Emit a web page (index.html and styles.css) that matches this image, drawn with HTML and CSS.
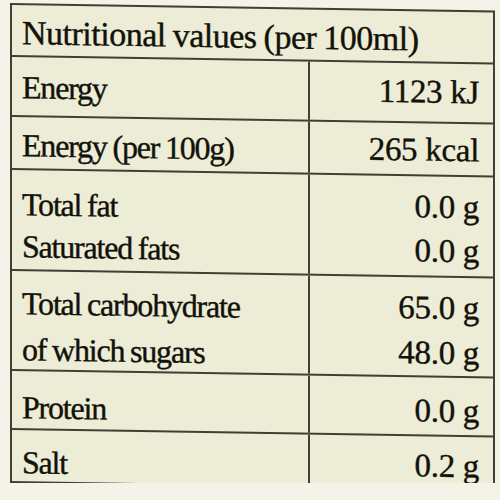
FILE: index.html
```
<!DOCTYPE html>
<html lang="en">
<head>
    <meta charset="UTF-8">
    <title>Nutritional values</title>
    <link rel="stylesheet" href="styles.css">
</head>
<body>

<div class="label">
    <div class="label-title">Nutritional values (per 100ml)</div>

    <div class="row row-energy">
        <div class="cell name">Energy</div>
        <div class="cell value">1123 kJ</div>
    </div>

    <div class="row row-kcal">
        <div class="cell name">Energy (per 100g)</div>
        <div class="cell value">265 kcal</div>
    </div>

    <div class="row row-fat">
        <div class="cell name">Total fat<br>Saturated fats</div>
        <div class="cell value">0.0 g<br>0.0 g</div>
    </div>

    <div class="row row-carb">
        <div class="cell name">Total carbohydrate<br>of which sugars</div>
        <div class="cell value">65.0 g<br>48.0 g</div>
    </div>

    <div class="row row-protein">
        <div class="cell name">Protein</div>
        <div class="cell value">0.0 g</div>
    </div>

    <div class="row row-salt">
        <div class="cell name">Salt</div>
        <div class="cell value">0.2 g</div>
    </div>
</div>

</body>
</html>
```

FILE: styles.css
```
body {
    margin: 0;
    padding: 3px 0 0 10px;
    background-color: #f3f3e8;
    font-family: "Liberation Serif", "DejaVu Serif", serif;
    color: #121209;
    -webkit-text-stroke: 0.4px #121209;
}

.label {
    width: 481px;
    border: 2px solid #3f3f35;
    background-color: #ececd7;
    transform: skewY(0.9deg);
    transform-origin: left top;
}

.label-title {
    height: 52px;
    box-sizing: border-box;
    padding: 5px 0 0 10px;
    font-size: 34px;
    line-height: 46px;
    letter-spacing: -0.5px;
    word-spacing: -1px;
    border-bottom: 2px solid #3f3f35;
}

.row {
    display: grid;
    grid-template-columns: 298px 1fr;
    border-bottom: 2px solid #3f3f35;
}

.row:last-child {
    border-bottom: none;
}

.cell {
    box-sizing: border-box;
    font-size: 33px;
    line-height: 46px;
}

.name {
    padding-left: 10px;
    border-right: 2px solid #3f3f35;
    font-size: 32px;
    letter-spacing: -1.2px;
    word-spacing: -1px;
}

.value {
    padding-right: 14px;
    text-align: right;
    letter-spacing: -0.3px;
}

.row-energy .cell { height: 58px; }
.row-energy .name { padding-top: 7px; }
.row-energy .value { padding-top: 5px; }

.row-kcal .cell { height: 51px; }
.row-kcal .name { padding-top: 5px; }
.row-kcal .value { padding-top: 3px; }

.row-fat .cell { height: 99px; }
.row-fat .name { padding-top: 13px; line-height: 42px; }
.row-fat .value { padding-top: 8px; line-height: 44px; }

.row-carb .cell { height: 98px; }
.row-carb .name { padding-top: 9px; }
.row-carb .value { padding-top: 8px; line-height: 45px; }

.row-protein .cell { height: 57px; }
.row-protein .name { padding-top: 13px; }
.row-protein .value { padding-top: 10px; }

.row-salt .cell { height: 51px; }
.row-salt .name { padding-top: 9px; }
.row-salt .value { padding-top: 6px; }
```
